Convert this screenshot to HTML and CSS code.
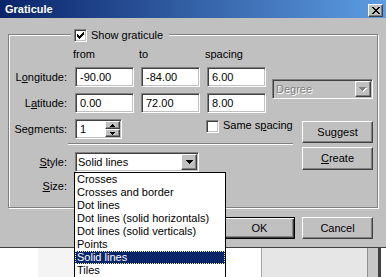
FILE: index.html
```html
<!DOCTYPE html>
<html lang="en">
<head>
	<meta charset="UTF-8">
	<title>Graticule</title>
	<link rel="stylesheet" href="styles.css">
</head>
<body>
	<div class="dialog">
		<div class="titlebar">
			<span class="title">Graticule</span>
			<span class="closebtn raised">
				<svg width="8" height="7" viewBox="0 0 8 7"><path d="M0 0h2v1H0zM6 0h2v1H6zM1 1h2v1H1zM5 1h2v1H5zM2 2h4v1H2zM3 3h2v1H3zM2 4h4v1H2zM1 5h2v1H1zM5 5h2v1H5zM0 6h2v1H0zM6 6h2v1H6z"/></svg>
			</span>
		</div>

		<div class="group">
			<div class="legend">
				<span class="check"><svg width="7" height="7" viewBox="0 0 7 7"><path d="M0 2h1v3H0zM1 3h1v3H1zM2 4h1v3H2zM3 3h1v3H3zM4 2h1v3H4zM5 1h1v3H5zM6 0h1v3H6z"/></svg></span>
				<span>Show <u>g</u>raticule</span>
			</div>

			<div class="leftpart">
				<div class="grid">
					<span></span>
					<span class="head">from</span>
					<span class="head">to</span>
					<span class="head">spacing</span>

					<span class="lbl">L<u>o</u>ngitude:</span>
					<span class="edit">-90.00</span>
					<span class="edit">-84.00</span>
					<span class="edit">6.00</span>

					<span class="lbl">L<u>a</u>titude:</span>
					<span class="edit">0.00</span>
					<span class="edit">72.00</span>
					<span class="edit">8.00</span>

					<span class="lbl">Se<u>g</u>ments:</span>
					<span class="spin">
						<span class="spinval">1</span>
						<span class="spinbtns">
							<span class="spinbtn raised"><svg width="5" height="3" viewBox="0 0 5 3"><path d="M2 0h1v1H2zM1 1h3v1H1zM0 2h5v1H0z"/></svg></span>
							<span class="spinbtn raised"><svg width="5" height="3" viewBox="0 0 5 3"><path d="M0 0h5v1H0zM1 1h3v1H1zM2 2h1v1H2z"/></svg></span>
						</span>
					</span>
					<span></span>
					<span class="samechk">
						<span class="check"></span>
						<span>Same s<u>p</u>acing</span>
					</span>
				</div>

				<div class="sep"></div>

				<div class="formrow stylerow">
					<span class="lbl"><u>S</u>tyle:</span>
					<span class="combo stylecombo">
						<span class="comboval">Solid lines</span>
						<span class="combobtn raised"><svg width="7" height="4" viewBox="0 0 7 4"><path d="M0 0h7v1H0zM1 1h5v1H1zM2 2h3v1H2zM3 3h1v1H3z"/></svg></span>
					</span>
				</div>

				<div class="formrow sizerow">
					<span class="lbl"><u>S</u>ize:</span>
				</div>
			</div>

			<div class="rightpart">
				<span class="combo unitcombo disabled">
					<span class="comboval">Degree</span>
					<span class="combobtn raised"><svg width="8" height="5" viewBox="0 0 8 5"><path fill="#fff" d="M1 1h7v1H1zM2 2h5v1H2zM3 3h3v1H3zM4 4h1v1H4z"/><path fill="#808080" d="M0 0h7v1H0zM1 1h5v1H1zM2 2h3v1H2zM3 3h1v1H3z"/></svg></span>
				</span>
				<span class="btn raised suggest">Su<u>g</u>gest</span>
				<span class="btn raised create"><u>C</u>reate</span>
			</div>
		</div>

		<div class="actions">
			<span class="btn default">OK</span>
			<span class="btn raised">Cancel</span>
		</div>
	</div>

	<div class="behind">
		<span class="b1"></span>
		<span class="b2"></span>
		<span class="b3"></span>
		<span class="b4"></span>
		<span class="b5"></span>
		<span class="b6"></span>
		<span class="b7"></span>
	</div>

	<ul class="droplist">
		<li>Crosses</li>
		<li>Crosses and border</li>
		<li>Dot lines</li>
		<li>Dot lines (solid horizontals)</li>
		<li>Dot lines (solid verticals)</li>
		<li>Points</li>
		<li class="sel">Solid lines</li>
		<li>Tiles</li>
	</ul>
</body>
</html>
```

FILE: styles.css
```css
* {box-sizing: border-box;}

body {
	margin: 0;
	width: 386px;
	height: 277px;
	overflow: hidden;
	position: relative;
	background: #fff;
	color: #000;
	font: 11px/13px "Liberation Sans", Arial, sans-serif;
}

u {text-underline-offset: 1px;}

/* dialog frame */
.dialog {height: 248px; background: #c0c0c0; border-bottom: 1px solid #404040;}

.titlebar {
	display: flex;
	height: 18px;
	padding-left: 5px;
	align-items: center;
	background: linear-gradient(to right, #0a246a, #5d9de2);
	color: #fff;
	font-weight: bold;
}
.title {flex: 1;}
.closebtn {
	display: flex;
	align-items: center;
	justify-content: center;
	width: 15px;
	height: 13px;
	margin: 3px 3px 0 0;
}

/* 3d borders */
.raised {
	background: #c0c0c0;
	border: 1px solid;
	border-color: #fff #404040 #404040 #fff;
	box-shadow: inset -1px -1px 0 #808080;
}
.edit, .spin, .combo, .check {
	background: #fff;
	border: 1px solid;
	border-color: #808080 #fff #fff #808080;
	box-shadow: inset 1px 1px 0 #404040, inset -1px -1px 0 #c0c0c0;
}

/* group box */
.group {
	position: relative;
	display: flex;
	width: 370px;
	height: 174px;
	margin: 16px 0 0 8px;
	border: 1px solid #808080;
	box-shadow: inset 1px 1px 0 #fff, 1px 1px 0 #fff;
}
.legend {
	position: absolute;
	top: -6px;
	left: 62px;
	display: flex;
	gap: 4px;
	padding: 0 6px 0 3px;
	background: #c0c0c0;
}
.check {display: flex; flex: none; width: 13px; height: 13px; padding: 2px;}

.leftpart {width: 263px; flex: none;}
.grid {
	display: grid;
	grid-template-columns: 59px 59px 59px 59px;
	grid-template-rows: 13px 20px 20px 20px;
	column-gap: 7px;
	row-gap: 6px;
	padding-top: 13px;
}
.head {margin-left: -2px;}
.lbl {align-self: center; text-align: right; padding-right: 1px; white-space: nowrap;}
.edit {display: flex; align-items: center; padding-left: 4px;}

.spin {display: flex; width: 47px; padding: 1px 1px 1px 4px;}
.spinval {flex: 1; align-self: center;}
.spinbtns {display: flex; flex-direction: column; width: 15px;}
.spinbtn {display: flex; align-items: center; justify-content: center; height: 8px;}

.samechk {display: flex; gap: 4px; align-items: flex-start; white-space: nowrap; margin-left: -1px;}
.samechk .check {margin-top: 1px;}

.sep {
	width: 225px;
	margin: 4px 0 0 59px;
	border-top: 1px solid #808080;
	border-bottom: 1px solid #fff;
}

.formrow {display: flex; gap: 7px; align-items: center;}
.formrow .lbl {width: 59px;}
.stylerow {height: 20px; margin-top: 7px;}
.sizerow {height: 13px; margin-top: 8px;}

.combo {display: flex; align-items: center; height: 20px; padding: 1px;}
.comboval {flex: 1; padding-left: 1px; white-space: nowrap;}
.combobtn {display: flex; align-items: center; justify-content: center; width: 16px; height: 16px;}
.stylecombo {width: 124px;}
.unitcombo {width: 101px;}
.disabled {background: #c0c0c0;}
.disabled .comboval {color: #808080; text-shadow: 1px 1px 0 #fff; padding-left: 2px;}

.rightpart {
	display: flex;
	flex-direction: column;
	align-items: flex-end;
	width: 105px;
	padding: 44px 4px 0 0;
}

.btn {display: flex; align-items: center; justify-content: center; width: 71px; height: 22px;}
.suggest {margin-top: 22px;}
.create {margin-top: 4px; height: 23px;}

.actions {display: flex; justify-content: flex-end; gap: 7px; padding: 9px 13px 0 0;}
.default {
	background: #c0c0c0;
	border: 1px solid #000;
	box-shadow: inset 1px 1px 0 #fff, inset -1px -1px 0 #404040, inset -2px -2px 0 #808080;
}

/* window behind the dialog */
.behind {display: flex; height: 29px;}
.behind span {height: 100%;}
.b1 {width: 38px; background: #fff;}
.b2 {width: 187px; background: #f4f4f4;}
.b3 {width: 37px; background: #fff; border-right: 1px solid #a8a8a8;}
.b4 {width: 106px; background: #e6e6e6; border-right: 1px solid #909090;}
.b5 {width: 10px; background: #c8c8c8;}
.b6 {width: 3px; background: #404040;}
.b7 {flex: 1; background: #fff;}

/* open drop-down list */
.droplist {
	position: absolute;
	left: 74px;
	top: 172px;
	width: 152px;
	margin: 0;
	padding: 0;
	list-style: none;
	background: #fff;
	border: 1px solid #000;
}
.droplist li {height: 13px; padding-left: 2px; white-space: nowrap; overflow: hidden;}
.droplist .sel {background: #0a246a; color: #fff; outline: 1px dotted #f0f0a0; outline-offset: -1px;}
```
